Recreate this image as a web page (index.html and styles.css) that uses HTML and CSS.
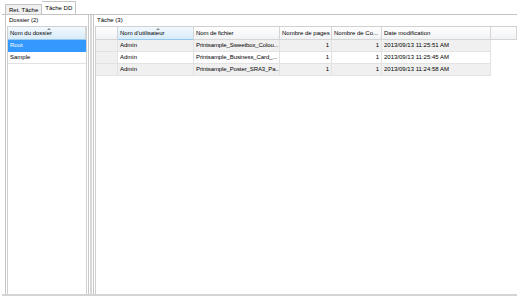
FILE: index.html
```html
<!DOCTYPE html>
<html lang="fr">
<head>
<meta charset="UTF-8">
<title>Tâche DD</title>
<link rel="stylesheet" href="styles.css">
</head>
<body>
    <div class="window">
        <!-- tabs -->
        <div class="tabs">
            <div class="tab">Ret. Tâche</div>
            <div class="tab active">Tâche DD</div>
        </div>

        <div class="panel">
            <!-- folders -->
            <div class="pane left">
                <div class="caption">Dossier (2)</div>
                <div class="grid folders">
                    <div class="row head">
                        <div class="cell sorted c-folder">Nom du dossier<span class="arrow"></span></div>
                    </div>
                    <div class="row selected"><div class="cell c-folder">Root</div></div>
                    <div class="row"><div class="cell c-folder">Sample</div></div>
                </div>
            </div>

            <div class="splitter"></div>

            <!-- tasks -->
            <div class="pane right">
                <div class="caption">Tâche (3)</div>
                <div class="grid tasks">
                    <div class="row head">
                        <div class="cell c-rh"></div>
                        <div class="cell sorted c-user">Nom d'utilisateur<span class="arrow"></span></div>
                        <div class="cell c-file">Nom de fichier</div>
                        <div class="cell c-pages">Nombre de pages</div>
                        <div class="cell c-copies">Nombre de Co...</div>
                        <div class="cell c-date">Date modification</div>
                        <div class="cell c-fill"></div>
                    </div>
                    <div class="row alt">
                        <div class="cell c-rh"></div>
                        <div class="cell c-user">Admin</div>
                        <div class="cell c-file">Printsample_Sweetbox_Colou...</div>
                        <div class="cell c-pages num">1</div>
                        <div class="cell c-copies num">1</div>
                        <div class="cell c-date">2013/09/13 11:25:51 AM</div>
                    </div>
                    <div class="row">
                        <div class="cell c-rh"></div>
                        <div class="cell c-user">Admin</div>
                        <div class="cell c-file">Printsample_Business_Card_...</div>
                        <div class="cell c-pages num">1</div>
                        <div class="cell c-copies num">1</div>
                        <div class="cell c-date">2013/09/13 11:25:45 AM</div>
                    </div>
                    <div class="row alt">
                        <div class="cell c-rh"></div>
                        <div class="cell c-user">Admin</div>
                        <div class="cell c-file">Printsample_Poster_SRA3_Pa...</div>
                        <div class="cell c-pages num">1</div>
                        <div class="cell c-copies num">1</div>
                        <div class="cell c-date">2013/09/13 11:24:58 AM</div>
                    </div>
                </div>
            </div>
        </div>
    </div>
</body>
</html>
```
FILE: styles.css
```css
body{
    margin: 0;
    background-color: #ffffff;
    font-family: "Liberation Sans", Arial, sans-serif;
    font-size: 6px;
    color: #000000;
}
.window{
    width: 517px;
    height: 300px;
    display: flex;
    flex-direction: column;
}
.tabs{
    height: 14px;
    display: flex;
    align-items: flex-end;
    padding-left: 5px;
}
.tab{
    height: 10px;
    line-height: 10px;
    padding: 0 3px;
    background-color: #f0f0f0;
    border: 1px solid #c4c4c4;
    border-bottom: none;
    box-sizing: border-box;
}
.tab.active{
    height: 13px;
    line-height: 12px;
    background-color: #ffffff;
    border-left: none;
}
.panel{
    height: 282px;
    margin-left: 2px;
    border-top: 1px solid #c4c4c4;
    border-bottom: 2px solid #d4d4d4;
    display: flex;
    box-sizing: border-box;
}
.pane{
    display: flex;
    flex-direction: column;
}
.left{
    width: 82px;
    margin-left: 3px;
    border-left: 1px solid #c8c8c8;
    border-right: 1px solid #c8c8c8;
}
.splitter{
    width: 2px;
    margin: 0 1px;
    background-color: #d8d8d8;
}
.right{
    flex: 1;
    border-left: 1px solid #c8c8c8;
}
.caption{
    height: 11px;
    line-height: 11px;
    padding-left: 3px;
}
.grid{
    flex: 1;
    border: 1px solid #d0d0d0;
    border-bottom: none;
    margin-left: 1px;
}
.folders{
    margin-right: 1px;
}
.tasks{
    border-right: none;
}
.row{
    display: flex;
    height: 12px;
    line-height: 11px;
}
.cell{
    box-sizing: border-box;
    padding: 0 2px;
    white-space: nowrap;
    overflow: hidden;
    border-right: 1px solid #e2e2e2;
    border-bottom: 1px solid #e2e2e2;
}
.head .cell{
    height: 13px;
    line-height: 13px;
    background: linear-gradient(#ffffff, #f1f2f4);
    border-right: 1px solid #d5d5d5;
    border-bottom: 1px solid #d5d5d5;
    position: relative;
}
.head{
    height: 13px;
}
.head .sorted{
    background: linear-gradient(#f2f9fe, #d7ebf9);
    border-bottom: 1px solid #96c8ef;
}
.arrow{
    position: absolute;
    top: 1px;
    left: 50%;
    width: 0;
    height: 0;
    border-left: 2px solid transparent;
    border-right: 2px solid transparent;
    border-bottom: 2px solid #8a8a8a;
}
.alt .cell{
    background-color: #f0f0f0;
}
.selected .cell{
    background-color: #3399ff;
    color: #ffffff;
    border-color: #3399ff;
}
.c-folder{
    width: 100%;
    border-right: none;
}
.c-rh{
    width: 22px;
    background-color: #f0f0f0;
}
.c-user{
    width: 76px;
}
.c-file{
    width: 86px;
    padding: 0 1px 0 2px;
    letter-spacing: -0.1px;
}
.c-pages{
    width: 52px;
}
.c-copies{
    width: 50px;
}
.c-date{
    width: 109px;
}
.c-fill{
    flex: 1;
}
.num{
    text-align: right;
}
```
